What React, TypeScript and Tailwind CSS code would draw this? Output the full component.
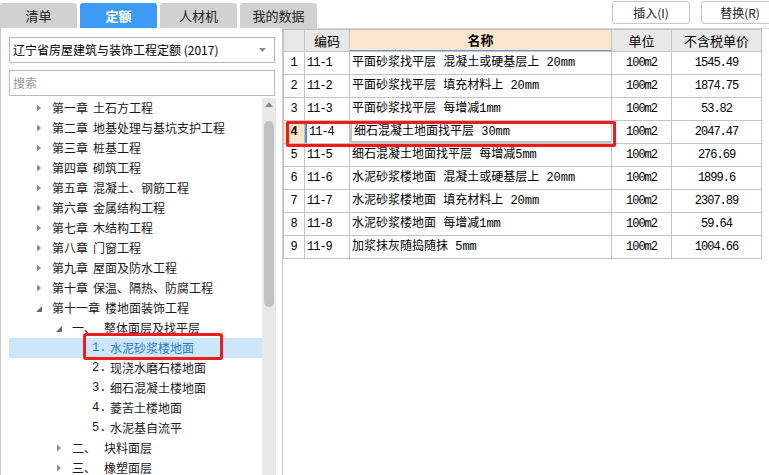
const cjk = { fontFamily: '"Noto Sans CJK SC", "Liberation Sans", sans-serif' };
const mono = { fontFamily: '"Liberation Mono", "Noto Sans CJK SC", monospace' };

type Node = { level: number; label: string; num?: string; icon?: 'closed' | 'open'; active?: boolean };

const tree: Node[] = [
  { level: 0, icon: 'closed', num: '第一章', label: '土石方工程' },
  { level: 0, icon: 'closed', num: '第二章', label: '地基处理与基坑支护工程' },
  { level: 0, icon: 'closed', num: '第三章', label: '桩基工程' },
  { level: 0, icon: 'closed', num: '第四章', label: '砌筑工程' },
  { level: 0, icon: 'closed', num: '第五章', label: '混凝土、钢筋工程' },
  { level: 0, icon: 'closed', num: '第六章', label: '金属结构工程' },
  { level: 0, icon: 'closed', num: '第七章', label: '木结构工程' },
  { level: 0, icon: 'closed', num: '第八章', label: '门窗工程' },
  { level: 0, icon: 'closed', num: '第九章', label: '屋面及防水工程' },
  { level: 0, icon: 'closed', num: '第十章', label: '保温、隔热、防腐工程' },
  { level: 0, icon: 'open', num: '第十一章', label: '楼地面装饰工程' },
  { level: 1, icon: 'open', num: '一、', label: '整体面层及找平层' },
  { level: 2, num: '1.', label: '水泥砂浆楼地面', active: true },
  { level: 2, num: '2.', label: '现浇水磨石楼地面' },
  { level: 2, num: '3.', label: '细石混凝土楼地面' },
  { level: 2, num: '4.', label: '菱苦土楼地面' },
  { level: 2, num: '5.', label: '水泥基自流平' },
  { level: 1, icon: 'closed', num: '二、', label: '块料面层' },
  { level: 1, icon: 'closed', num: '三、', label: '橡塑面层' },
];

const rows = [
  ['1', '11-1', '平面砂浆找平层 混凝土或硬基层上 20mm', '100m2', '1545.49'],
  ['2', '11-2', '平面砂浆找平层 填充材料上 20mm', '100m2', '1874.75'],
  ['3', '11-3', '平面砂浆找平层 每增减1mm', '100m2', '53.82'],
  ['4', '11-4', '细石混凝土地面找平层 30mm', '100m2', '2047.47'],
  ['5', '11-5', '细石混凝土地面找平层 每增减5mm', '100m2', '276.69'],
  ['6', '11-6', '水泥砂浆楼地面 混凝土或硬基层上 20mm', '100m2', '1899.6'],
  ['7', '11-7', '水泥砂浆楼地面 填充材料上 20mm', '100m2', '2307.89'],
  ['8', '11-8', '水泥砂浆楼地面 每增减1mm', '100m2', '59.64'],
  ['9', '11-9', '加浆抹灰随捣随抹 5mm', '100m2', '1004.66'],
];

const Arrow = ({ open }: { open: boolean }) =>
  open ? (
    <svg width="7" height="7" viewBox="0 0 7 7" className="mt-[3px]">
      <polygon points="6,0 6,6 0,6" fill="#6b6b6b" />
    </svg>
  ) : (
    <svg width="6" height="8" viewBox="0 0 6 8">
      <polygon points="1,0.5 5,4 1,7.5" fill="#8c8c8c" />
    </svg>
  );

const Tab = ({ label, active }: { label: string; active?: boolean }) => (
  <div
    className={`w-[77px] h-[25px] rounded-t-[3px] flex items-center justify-center text-[13px] ${
      active ? 'bg-[#3d9bf6] text-white font-bold' : 'bg-[#d1d1d1] text-[#222]'
    }`}
    style={cjk}
  >
    {label}
  </div>
);

export default function App() {
  return (
    <div className="w-[769px] h-[475px] overflow-hidden bg-white text-black">
      {/* top bar */}
      <div className="h-[28px] flex">
        <div className="flex items-end gap-[3px]">
          <Tab label="清单" />
          <Tab label="定额" active />
          <Tab label="人材机" />
          <Tab label="我的数据" />
        </div>
        <div className="ml-auto flex gap-[11px] pt-[1px] -mr-[10px]">
          <button className="w-[78px] h-[23px] border border-[#c6c6c6] rounded-[3px] bg-white text-[12px] text-[#222]" style={cjk}>
            插入(I)
          </button>
          <button className="w-[78px] h-[23px] border border-[#c6c6c6] rounded-[3px] bg-white text-[12px] text-[#222]" style={cjk}>
            替换(R)
          </button>
        </div>
      </div>

      <div className="flex h-[447px]">
        {/* left panel */}
        <div className="w-[283px] border-l border-r border-[#c9c9c9] pl-[8px] pt-[9px] flex flex-col">
          <div className="w-[266px] h-[26px] border border-[#b9b9b9] flex items-center pl-[3px] pr-[8px] text-[12px]" style={cjk}>
            <span className="flex-1">辽宁省房屋建筑与装饰工程定额 (2017)</span>
            <svg width="7" height="4" viewBox="0 0 7 4">
              <polygon points="0,0 7,0 3.5,4" fill="#8a8a8a" />
            </svg>
          </div>
          <div className="w-[266px] h-[26px] mt-[7px] border border-[#b9b9b9] flex items-center pl-[3px] text-[12px] text-[#9a9a9a]" style={cjk}>
            搜索
          </div>
          <div className="flex flex-1 mt-[2px] min-h-0">
            <div className="w-[253px]">
              {tree.map((n, i) => (
                <div
                  key={i}
                  className={`relative h-[20px] flex items-center text-[12px] leading-[20px] ${
                    n.active ? 'bg-[#cde7fa] text-[#2a78d6]' : 'text-[#1a1a1a]'
                  }`}
                  style={{ ...cjk, paddingLeft: 27 + n.level * 20 }}
                >
                  <span className="w-[16px] flex items-center">{n.icon && <Arrow open={n.icon === 'open'} />}</span>
                  {n.level === 0 && <span className="mr-[5px]">{n.num}</span>}
                  {n.level === 1 && <span className="w-[32px]">{n.num}</span>}
                  {n.level === 2 && (
                    <span className="w-[18px]" style={mono}>
                      {n.num}
                    </span>
                  )}
                  <span>{n.label}</span>
                  {n.active && (
                    <span className="absolute left-[74px] top-[-5px] w-[140px] h-[27px] border-[3px] border-[#ec1c1c] rounded-[3px]" />
                  )}
                </div>
              ))}
            </div>
            <div className="w-[14px] bg-[#e8e8e8] flex flex-col items-center pt-[4px]">
              <svg width="8" height="5" viewBox="0 0 8 5">
                <polygon points="4,0 8,5 0,5" fill="#8a8a8a" />
              </svg>
              <div className="w-[10px] h-[186px] mt-[14px] rounded-full bg-[#c2c2c2]" />
            </div>
          </div>
        </div>

        {/* right panel */}
        <div className="flex-1 border-t border-[#d4d4d4]">
          <div className="relative w-[479px] border-l border-[#c3c3c3] text-[12px]">
            <div className="flex h-[23px] border-b border-t border-[#c3c3c3] text-[13px]" style={cjk}>
              <div className="w-[21px] bg-[#e8e8e8] border-r border-[#c3c3c3]" />
              <div className="w-[45px] bg-[#e8e8e8] border-r border-[#c3c3c3] flex items-center justify-center">编码</div>
              <div className="w-[262px] bg-[#fde7cc] border-r border-[#c3c3c3] border-b border-b-[#5b9be0] flex items-center justify-center font-bold">
                名称
              </div>
              <div className="w-[60px] bg-[#e8e8e8] border-r border-[#c3c3c3] flex items-center justify-center">单位</div>
              <div className="w-[90px] bg-[#e8e8e8] border-r border-[#c3c3c3] flex items-center justify-center">不含税单价</div>
            </div>
            {rows.map((r) => {
              const sel = r[0] === '4';
              return (
                <div key={r[0]} className="flex h-[23px] border-b border-[#c3c3c3]" style={mono}>
                  <div
                    className={`w-[21px] border-r border-[#c3c3c3] flex items-center justify-center ${sel ? 'bg-[#fde4c6] font-bold' : ''}`}
                  >
                    {r[0]}
                  </div>
                  <div
                    className={`w-[45px] border-r border-[#c3c3c3] flex items-center pl-[2px] tracking-[-1px] ${
                      sel ? 'border-l-2 border-l-[#4a8ee0]' : ''
                    }`}
                  >
                    {r[1]}
                  </div>
                  <div className={`w-[262px] border-r border-[#c3c3c3] flex items-center pl-[2px] whitespace-nowrap ${sel ? 'border-2 border-[#7d7d7d]' : ''}`}>
                    {r[2]}
                  </div>
                  <div className="w-[60px] border-r border-[#c3c3c3] flex items-center justify-center tracking-[-1px]">{r[3]}</div>
                  <div className="w-[90px] border-r border-[#c3c3c3] flex items-center justify-center tracking-[-1px]">{r[4]}</div>
                </div>
              );
            })}
            <span className="absolute left-[2px] top-[92px] w-[330px] h-[26px] border-[3px] border-[#ec1c1c] rounded-[2px]" />
          </div>
        </div>
      </div>
    </div>
  );
}
